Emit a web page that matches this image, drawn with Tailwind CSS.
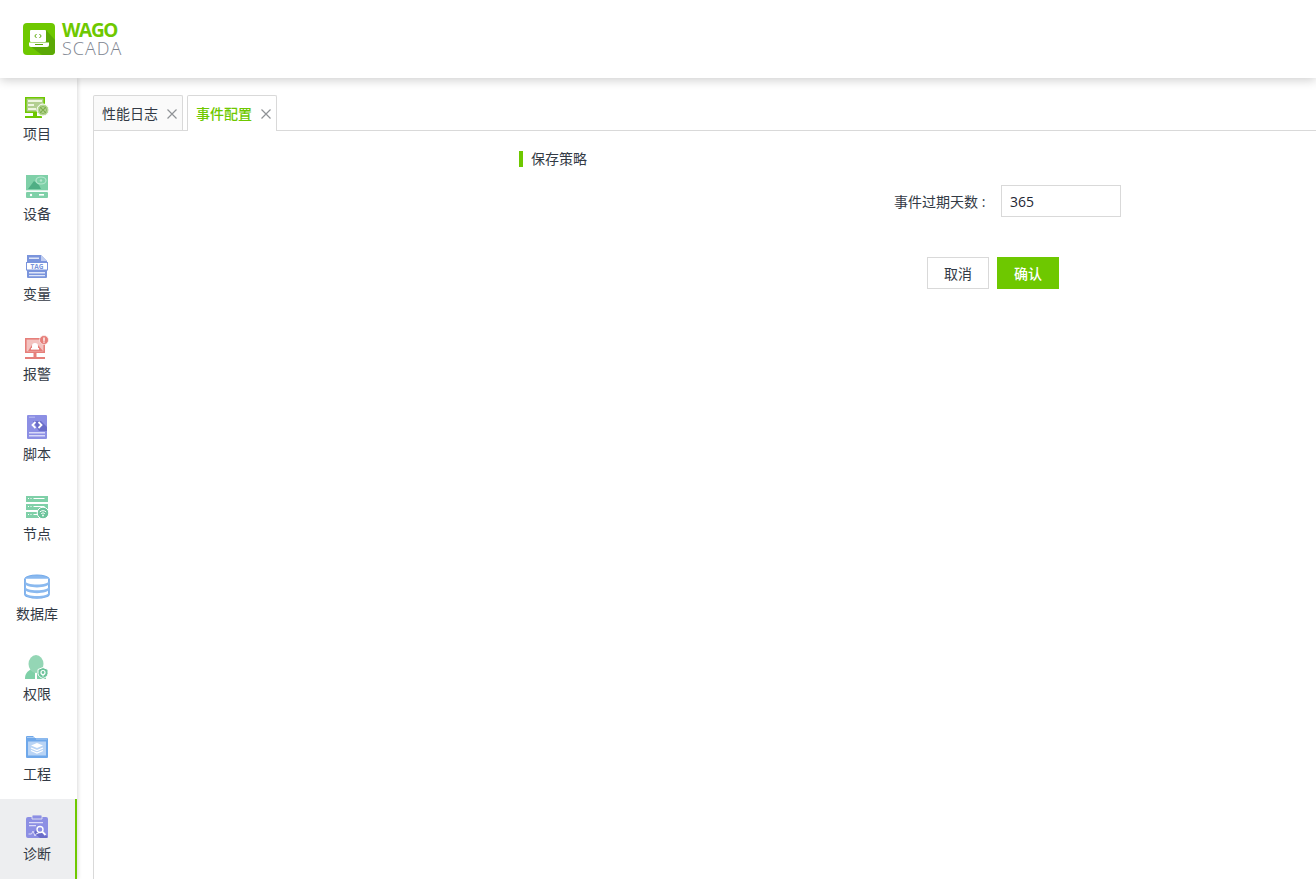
<!DOCTYPE html>
<html lang="zh-CN">
<head>
    <meta charset="UTF-8">
    <title>WAGO SCADA</title>
    <script src="https://cdn.jsdelivr.net/npm/@tailwindcss/browser@4"></script>
</head>
<body class="bg-white h-[879px] w-[1316px] overflow-hidden font-['Open_Sans','Noto_Sans_CJK_SC',sans-serif] text-[14px] text-[#333a45]">
    <!-- Header -->
    <header class="relative z-20 h-[78px] bg-white shadow-[0_2px_10px_rgba(0,0,0,0.2)] flex items-center pl-[23px]">
        <svg width="32" height="32" viewBox="0 0 32 32">
            <rect width="32" height="32" rx="4" fill="#6ec800"/>
            <path d="M23 7L32 17V28a4 4 0 0 1-4 4H19L7 23Z" fill="#5ba806"/>
            <rect x="7" y="7" width="16" height="12" rx="1" fill="#fff"/>
            <path d="M6 19.500h20v2.500a2 2 0 0 1-2 2H8a2 2 0 0 1-2-2Z" fill="#fff"/>
            <path d="M13.500 11L11.800 13L13.500 15M16.500 11L18.200 13L16.500 15" stroke="#5ba806" stroke-width="1" fill="none"/>
            <rect x="12" y="21" width="8" height="1" fill="#5ba806"/>
        </svg>
        <div class="ml-[7px] flex flex-col">
            <span class="text-[19px] leading-[19px] font-bold text-[#6ec800] tracking-[-1.3px]">WAGO</span>
            <span class="text-[18px] leading-[17px] font-light text-[#7d8490] tracking-[1px]">SCADA</span>
        </div>
    </header>

    <div class="flex h-[801px]">
        <!-- Sidebar -->
        <nav class="relative z-10 w-[77px] shrink-0 pt-[1px] bg-white shadow-[1px_0_4px_rgba(0,0,0,0.15)] text-center">
            <a class="h-[80px] pr-[3px] flex flex-col items-center pt-[15px]">
                <svg width="26" height="26" viewBox="0 0 26 26">
                    <path d="M1.800 3.800h18.400v14.400H1.800z" fill="#b2cf90" stroke="#6ec800" stroke-width="1.600"/>
                    <path d="M4 6h14v2H4z" fill="#eef6e0"/>
                    <path d="M4 10h6v2H4zM4 14h8v2H4z" fill="#eef6e0"/>
                    <path d="M9 19h4v3H9zM1 22h17v2H1z" fill="#6ec800"/>
                    <circle cx="19" cy="16" r="6" fill="#b7d795" stroke="#fff" stroke-width="1"/>
                    <path d="M16 13l6 6M22 13l-6 6" stroke="#7fae4e" stroke-width="1.100"/>
                    <circle cx="19" cy="16" r="3.500" fill="none" stroke="#7fae4e" stroke-width="0.800"/>
                </svg>
                <span class="mt-[4px] leading-5">项目</span>
            </a>
            <a class="h-[80px] pr-[3px] flex flex-col items-center pt-[15px]">
                <svg width="26" height="26" viewBox="0 0 26 26">
                    <rect x="2" y="1" width="22" height="15" fill="#7fd0a8"/>
                    <path d="M4 15L10 7L15 11L17 15Z" fill="#4fae84"/>
                    <ellipse cx="17" cy="6.500" rx="5" ry="3.500" fill="none" stroke="#b5e6ce" stroke-width="1.200"/>
                    <circle cx="17" cy="6.500" r="1.200" fill="#b5e6ce"/>
                    <rect x="2" y="16" width="22" height="1.200" fill="#d6f0e3"/>
                    <rect x="2" y="18" width="22" height="6" rx="1" fill="#7fd0a8"/>
                    <circle cx="7" cy="21" r="1.200" fill="#fff"/>
                    <rect x="15" y="20" width="5" height="1.600" fill="#fff"/>
                </svg>
                <span class="mt-[4px] leading-5">设备</span>
            </a>
            <a class="h-[80px] pr-[3px] flex flex-col items-center pt-[15px]">
                <svg width="26" height="26" viewBox="0 0 26 26">
                    <path d="M3 1h14l6 6v16a1 1 0 0 1-1 1H4a1 1 0 0 1-1-1Z" fill="#7a94dc"/>
                    <path d="M17 1l6 6h-6Z" fill="#c0cdf0"/>
                    <path d="M5 3.500h10v1.400H5zM5 18h16v1.400H5zM5 21h16v1.200H5z" fill="#dfe6f8"/>
                    <rect x="2.500" y="8.500" width="21" height="7.500" fill="#fff" stroke="#7a94dc"/>
                    <text x="13" y="14.700" text-anchor="middle" font-size="6.500" font-weight="700" font-family="'Open Sans',sans-serif" fill="#7a94dc">TAG</text>
                </svg>
                <span class="mt-[4px] leading-5">变量</span>
            </a>
            <a class="h-[80px] pr-[3px] flex flex-col items-center pt-[15px]">
                <svg width="26" height="26" viewBox="0 0 26 26">
                    <rect x="1.800" y="4.800" width="18.400" height="13.400" fill="#f3c3c0" stroke="#e67f7a" stroke-width="1.600"/>
                    <path d="M4 17l4-6h6l5 6z" fill="#e67f7a"/>
                    <path d="M8 14v-2a3 3 0 0 1 6 0v2Z" fill="#fff"/>
                    <rect x="7" y="14" width="8" height="1.600" fill="#fff"/>
                    <rect x="1" y="23" width="20" height="2" fill="#e67f7a"/>
                    <rect x="9.500" y="19" width="3" height="4" fill="#e67f7a"/>
                    <circle cx="20" cy="6" r="4.500" fill="#e67f7a" stroke="#fff" stroke-width="0.600"/>
                    <rect x="19.300" y="3.500" width="1.400" height="3.400" fill="#fff"/>
                    <rect x="19.300" y="7.400" width="1.400" height="1.300" fill="#fff"/>
                </svg>
                <span class="mt-[4px] leading-5">报警</span>
            </a>
            <a class="h-[80px] pr-[3px] flex flex-col items-center pt-[15px]">
                <svg width="26" height="26" viewBox="0 0 26 26">
                    <rect x="3" y="1" width="20" height="24" rx="1" fill="#8c8fe4"/>
                    <path d="M5 3.200h6" stroke="#b5b7ef" stroke-width="1.200"/>
                    <path d="M9 7h8l6 6v4H15z" fill="#6a6dc9"/>
                    <path d="M5 18h16v1.400H5zM5 21h16v1.400H5z" fill="#d9daf8"/>
                    <path d="M11.500 8L8.500 11L11.500 14M14.500 8L17.500 11L14.500 14" stroke="#fff" stroke-width="1.800" fill="none"/>
                </svg>
                <span class="mt-[4px] leading-5">脚本</span>
            </a>
            <a class="h-[80px] pr-[3px] flex flex-col items-center pt-[16px]">
                <svg width="26" height="26" viewBox="0 0 26 26">
                    <rect x="2" y="1" width="22" height="6" fill="#7fd0a8"/>
                    <rect x="2" y="9" width="22" height="6" fill="#7fd0a8"/>
                    <rect x="2" y="17" width="16" height="6" fill="#7fd0a8"/>
                    <path d="M4 3.500h1M6.500 3.500h1M9.500 3.500h11M4 11.500h1M6.500 11.500h1M9.500 11.500h11M4 19.500h1M6.500 19.500h1M9.500 19.500h6" stroke="#fff" stroke-width="1.200"/>
                    <circle cx="19" cy="18" r="5.800" fill="#6cc39b" stroke="#fff"/>
                    <path d="M15.800 17a4.500 4.500 0 0 1 6.400 0M17.200 18.700a2.500 2.500 0 0 1 3.600 0" stroke="#fff" stroke-width="1" fill="none"/>
                    <circle cx="19" cy="20.500" r="0.900" fill="#fff"/>
                </svg>
                <span class="mt-[3px] leading-5">节点</span>
            </a>
            <a class="h-[80px] pr-[3px] flex flex-col items-center pt-[15px]">
                <svg width="26" height="26" viewBox="0 0 26 26">
                    <g transform="translate(-1.200 0) scale(1.090 0.960)">
                        <ellipse cx="13" cy="5" rx="11" ry="4" fill="#8ab9ef" stroke="#72a9ea"/>
                        <path d="M2 5v16c0 2.200 5 4 11 4s11-1.800 11-4V5" fill="#fff" stroke="#72a9ea" stroke-width="1.600"/>
                        <path d="M2 7c0 2.200 5 4 11 4s11-1.800 11-4v3c0 2.200-5 4-11 4S2 12.200 2 10Z" fill="#8ab9ef"/>
                        <path d="M2 13c0 2.200 5 4 11 4s11-1.800 11-4v3c0 2.200-5 4-11 4S2 18.200 2 16Z" fill="#8ab9ef"/>
                        <path d="M2 19c0 2.200 5 4 11 4s11-1.800 11-4v2c0 2.200-5 4-11 4S2 23.200 2 21Z" fill="#8ab9ef"/>
                    </g>
                </svg>
                <span class="mt-[4px] leading-5">数据库</span>
            </a>
            <a class="h-[80px] pr-[3px] flex flex-col items-center pt-[15px]">
                <svg width="26" height="26" viewBox="0 0 26 26">
                    <path d="M1 25c0-5 2-8 7-10L11 18.500V25ZM13 25v-6.500L16 15c3 1 5 3 6 6v4Z" fill="#7fd0a8"/>
                    <ellipse cx="12" cy="10" rx="7.500" ry="9" fill="#94d6b5"/>
                    <path d="M19 13.500l5 2v4c0 2.500-2.500 4-5 5-2.500-1-5-2.500-5-5v-4Z" fill="#6cc39b" stroke="#fff"/>
                    <circle cx="19" cy="18.500" r="2" fill="none" stroke="#fff" stroke-width="1.200"/>
                    <path d="M19 20.500v2" stroke="#fff" stroke-width="1.200"/>
                </svg>
                <span class="mt-[4px] leading-5">权限</span>
            </a>
            <a class="h-[80px] pr-[3px] flex flex-col items-center pt-[15px]">
                <svg width="26" height="26" viewBox="0 0 26 26">
                    <path d="M2 3a1 1 0 0 1 1-1h6l2 2h12a1 1 0 0 1 1 1v18a1 1 0 0 1-1 1H3a1 1 0 0 1-1-1Z" fill="#6fa8ea"/>
                    <path d="M3 3.500h7M12 5h11" stroke="#b9d4f5" stroke-width="0.800"/>
                    <rect x="4" y="7.500" width="18" height="14" fill="#b9d4f5"/>
                    <path d="M13 9l6 2.500-6 2.500-6-2.500Z" fill="#fff"/>
                    <path d="M7 14l6 2.500 6-2.500M7 16.500l6 2.500 6-2.500" stroke="#fff" stroke-width="1.200" fill="none"/>
                </svg>
                <span class="mt-[4px] leading-5">工程</span>
            </a>
            <a class="h-[80px] pr-[1px] flex flex-col items-center pt-[15px] bg-[#edeef0] border-r-2 border-[#6ec800]">
                <svg width="26" height="26" viewBox="0 0 26 26">
                    <rect x="2" y="3" width="22" height="21" rx="2" fill="#8c8fe4"/>
                    <path d="M9 1h8a1 1 0 0 1 1 1V5H8V2a1 1 0 0 1 1-1Z" fill="#8c8fe4" stroke="#edeef0" stroke-width="0.800"/>
                    <path d="M14 13l10 10v0a2 2 0 0 1-2 1h-6l-6-5Z" fill="#6a6dc9"/>
                    <path d="M5 8h14v1.300H5zM5 11h7v1.300H5z" fill="#dcdcf8"/>
                    <path d="M4.500 20h3l1.500-3 2 5 1.500-2.500h2" stroke="#dcdcf8" stroke-width="1" fill="none"/>
                    <circle cx="16" cy="15.500" r="3" fill="#8c8fe4" stroke="#fff" stroke-width="1.400"/>
                    <path d="M18.200 17.700l3.300 3.300" stroke="#fff" stroke-width="1.800"/>
                </svg>
                <span class="mt-[4px] leading-5">诊断</span>
            </a>
        </nav>

        <!-- Content -->
        <main class="flex-1 pl-[16px] pt-[17px] flex flex-col min-w-0">
            <div class="flex h-[36px] gap-[4px] border-b border-[#d9d9d9] shrink-0">
                <div class="w-[90px] h-[35px] flex items-center pl-[8px] bg-[#fafafa] border border-b-0 border-[#d9d9d9] rounded-t-[2px]">
                    <span>性能日志</span>
                    <svg width="12" height="12" viewBox="0 0 12 12" class="ml-[8px] mt-[1px]"><path d="M1.500 1.500l9 9M10.500 1.500l-9 9" stroke="#8f9296" stroke-width="1.200"/></svg>
                </div>
                <div class="w-[90px] h-[36px] flex items-center pl-[8px] pb-[1px] bg-white border border-b-0 border-[#d9d9d9] rounded-t-[2px] text-[#6ec800]">
                    <span class="font-medium">事件配置</span>
                    <svg width="12" height="12" viewBox="0 0 12 12" class="ml-[8px] mt-[1px]"><path d="M1.500 1.500l9 9M10.500 1.500l-9 9" stroke="#8f9296" stroke-width="1.200"/></svg>
                </div>
            </div>
            <div class="flex-1 border-l border-[#d9d9d9] pl-[425px] pt-[20px]">
                <div class="w-[602px]">
                    <h2 class="h-[16px] pb-[2px] border-l-4 border-[#6ec800] pl-[8px] flex items-center font-normal">保存策略</h2>
                    <div class="flex items-center justify-end mt-[18px]">
                        <label class="mr-[12px] whitespace-pre">事件过期天数 : </label>
                        <div class="w-[120px] h-[32px] border border-[#d9d9d9] flex items-center pl-[8px] text-[#1f2733]">365</div>
                    </div>
                    <div class="flex gap-[8px] mt-[40px] ml-[408px]">
                        <button class="w-[62px] h-[32px] border border-[#d9d9d9] bg-white">取消</button>
                        <button class="w-[62px] h-[32px] bg-[#6ec800] text-white font-medium">确认</button>
                    </div>
                </div>
            </div>
        </main>
    </div>
</body>
</html>
